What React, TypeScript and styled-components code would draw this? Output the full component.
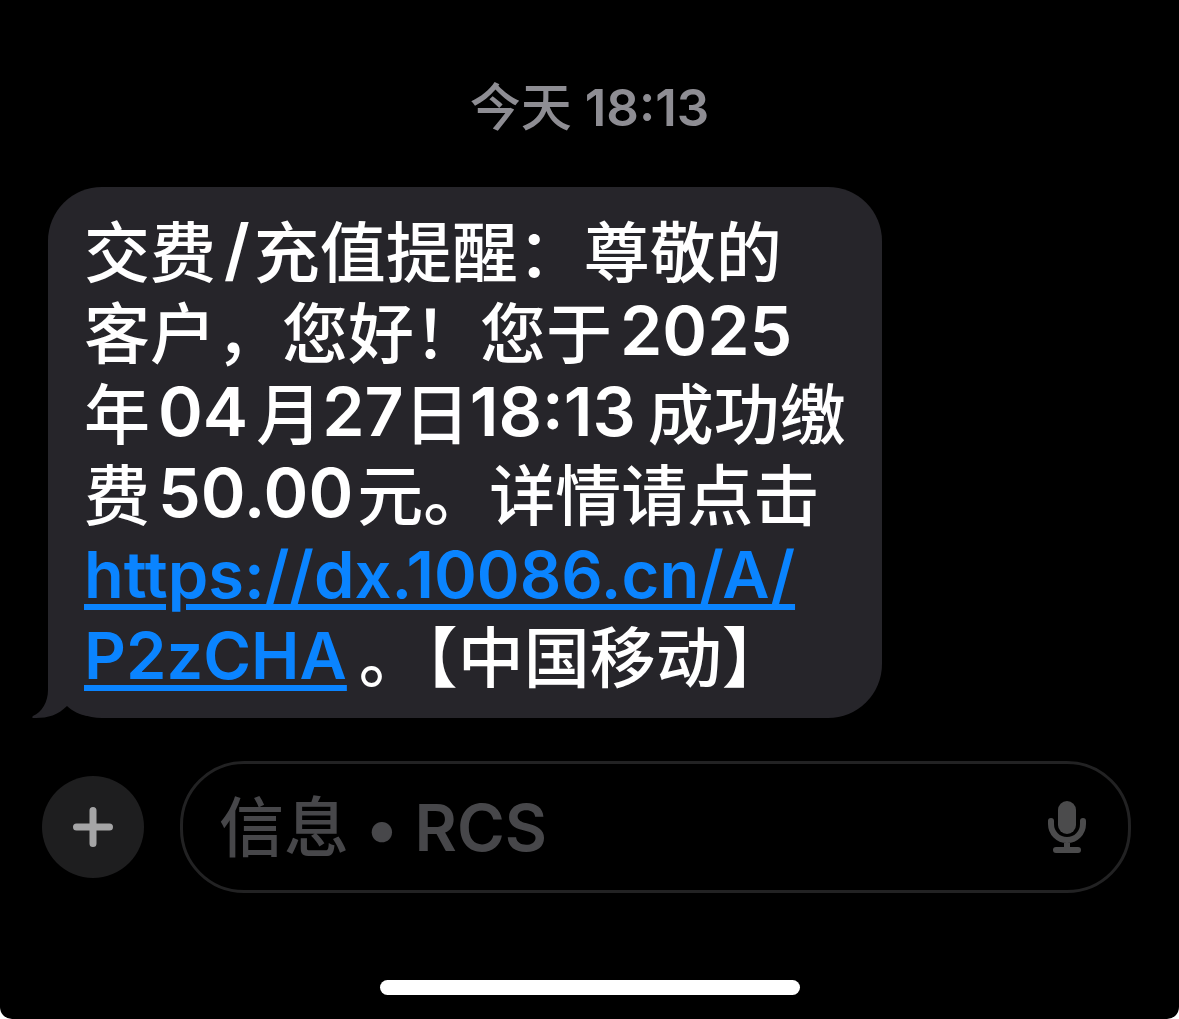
import React from "react";
import styled, { createGlobalStyle } from "styled-components";

const GlobalStyle = createGlobalStyle`
  *, *::before, *::after { box-sizing: border-box; }
  html { background: #fff; }
  body { margin: 0; }
`;

const fontStack = `Inter, "Noto Sans CJK SC Medium", "Noto Sans CJK SC", sans-serif`;

const Screen = styled.main`
  display: flex;
  flex-direction: column;
  min-height: 100vh;
  padding: 78px 48px 24px;
  background: #000;
  border-radius: 0 0 12px 12px;
  color: #fff;
  font-family: ${fontStack};
  font-synthesis: none;
`;

const Timestamp = styled.time`
  display: block;
  color: #8e8d93;
  font-size: 51px;
  font-weight: 600;
  line-height: 60px;
  text-align: center;
`;

const Thread = styled.section`
  display: flex;
  flex-direction: column;
  align-items: flex-start;
  margin-top: 49px;
`;

const Bubble = styled.article`
  position: relative;
  max-width: 100%;
  padding: 26px 36px 19px;
  border-radius: 54px;
  background: #26252a;
`;

const Tail = styled.svg`
  position: absolute;
  left: -16px;
  bottom: 0;
  width: 56px;
  height: 60px;
`;

const Message = styled.p`
  position: relative;
  margin: 0;
  font-size: 66px;
  font-weight: 500;
  line-height: 81px;
`;

const Latin = styled.span<{ $before?: number; $after?: number }>`
  margin-left: ${({ $before = 8 }) => $before}px;
  margin-right: ${({ $after = 8 }) => $after}px;
  font-size: 68px;
  font-weight: 600;
  line-height: 1;
  vertical-align: 3px;
`;

const Link = styled.a`
  margin-right: 12px;
  color: #0a84ff;
  font-size: 65px;
  font-weight: 600;
  line-height: 1;
  vertical-align: 3px;
  text-decoration: underline;
  text-decoration-thickness: 6px;
  text-underline-offset: 6px;
`;

const Composer = styled.form`
  display: flex;
  align-items: center;
  gap: 36px;
  margin: 43px 0 0 -6px;
`;

const AddButton = styled.button`
  display: grid;
  flex: none;
  place-items: center;
  width: 102px;
  height: 102px;
  padding: 0;
  border: 0;
  border-radius: 50%;
  background: #1e1e1f;
`;

const Field = styled.div`
  display: flex;
  flex: 1;
  align-items: center;
  min-width: 0;
  height: 132px;
  padding: 0 41px 0 36px;
  border: 3px solid #222223;
  border-radius: 64px;
`;

const Input = styled.input`
  flex: 1;
  min-width: 0;
  padding: 0;
  border: 0;
  outline: 0;
  background: transparent;
  color: #fff;
  font-family: ${fontStack};
  font-size: 65px;
  font-weight: 600;
  line-height: 81px;

  &::placeholder {
    color: #47474a;
    opacity: 1;
  }
`;

const MicButton = styled.button`
  display: flex;
  flex: none;
  padding: 0;
  border: 0;
  background: transparent;
`;

const HomeIndicator = styled.div`
  width: 420px;
  height: 15px;
  margin: auto auto 0;
  border-radius: 8px;
  background: #fff;
`;

export default function App() {
  return (
    <>
      <GlobalStyle />
      <Screen lang="zh-CN">
        <Timestamp>今天 18:13</Timestamp>
        <Thread>
          <Bubble>
            <Tail viewBox="0 0 56 60" aria-hidden="true">
              <path
                d="M16 0V32C16 44 10 54 1 58C-1 60 1 60 4 60C16 60 26 57 35 48C40 53 48 57 56 58V0Z"
                fill="#26252a"
              />
            </Tail>
            <Message>
              交费<Latin $after={4}>/</Latin>充值提醒：尊敬的
              <br />
              客户，您好！您于<Latin>2025</Latin>
              <br />
              年<Latin>04</Latin>月<Latin $before={0} $after={0}>27</Latin>日
              <Latin $before={0} $after={12}>18:13</Latin>成功缴
              <br />
              费<Latin $after={4}>50.00</Latin>元。详情请点击
              <br />
              <Link href="https://dx.10086.cn/A/P2zCHA">
                https://dx.10086.cn/A/
                <br />
                P2zCHA
              </Link>
              。【中国移动】
            </Message>
          </Bubble>
        </Thread>
        <Composer onSubmit={(e: React.FormEvent) => e.preventDefault()}>
          <AddButton type="button" aria-label="添加">
            <svg width="42" height="42" viewBox="0 0 42 42" fill="none" stroke="#a5a5a6" strokeWidth="7" strokeLinecap="round">
              <path d="M21 4.5V37.500M4.500 21H37.500" />
            </svg>
          </AddButton>
          <Field>
            <Input type="text" aria-label="信息" placeholder="信息 • RCS" />
            <MicButton type="button" aria-label="听写">
              <svg width="40" height="54" viewBox="0 0 40 54" fill="none">
                <rect x="11" y="1" width="18" height="33" rx="9" fill="#4b4b4c" />
                <path
                  d="M4 21V24C4 33 11 40 20 40S36 33 36 24V21M20 41V49M9 50H31"
                  stroke="#4b4b4c"
                  strokeWidth="6"
                  strokeLinecap="round"
                />
              </svg>
            </MicButton>
          </Field>
        </Composer>
        <HomeIndicator />
      </Screen>
    </>
  );
}
